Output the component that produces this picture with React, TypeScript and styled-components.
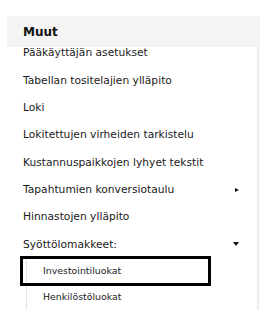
import styled, { createGlobalStyle } from "styled-components";

const GlobalStyle = createGlobalStyle`
  body {
    margin: 0;
    background: #ffffff;
    font-family: "DejaVu Sans", Verdana, sans-serif;
    color: #1a1a1a;
  }
`;

const Panel = styled.nav`
  padding: 16px 0 0 7px;
  height: 299px;
  overflow: hidden;
`;

const Header = styled.div`
  position: relative;
  z-index: 1;
  height: 31px;
  display: flex;
  align-items: center;
  padding-left: 16px;
  background: #f4f4f4;
  font-size: 12px;
  font-weight: bold;
  color: #111;
`;

const MenuList = styled.ul`
  list-style: none;
  margin: -7.7px 1px 0 0;
  padding: 0;
  border-right: 2px solid #ececec;
`;

const MenuItem = styled.li`
  height: 27.33px;
  display: flex;
  align-items: center;
  justify-content: space-between;
  padding: 0 18px 0 16px;
  font-size: 10.7px;
  white-space: nowrap;
`;

// pieni kolmio: oikealle = alivalikko kiinni, alas = auki
const Caret = styled.span<{ $open?: boolean }>`
  width: 0;
  height: 0;
  border-style: solid;
  border-color: transparent;
  ${(p) =>
    p.$open
      ? `border-width: 4px 3px 0 3px; border-top-color: #111;`
      : `border-width: 2.5px 0 2.5px 4px; border-left-color: #111;`}
`;

const SubList = styled.ul`
  list-style: none;
  margin: 0 0 0 19px;
  padding: 0;
  border-left: 1px solid #e2e2e2;
`;

const SubItem = styled.li`
  padding: 1px 0;
`;

const SubLink = styled.a<{ $focused?: boolean }>`
  display: block;
  width: 165px;
  height: 24px;
  line-height: 24px;
  margin-left: -4px;
  padding-left: 20px;
  font-size: 9.4px;
  color: #1a1a1a;
  text-decoration: none;
  outline: ${(p) => (p.$focused ? "3px solid #000" : "none")};
`;

const items: { label: string; caret?: "closed" | "open" }[] = [
  { label: "Pääkäyttäjän asetukset" },
  { label: "Tabellan tositelajien ylläpito" },
  { label: "Loki" },
  { label: "Lokitettujen virheiden tarkistelu" },
  { label: "Kustannuspaikkojen lyhyet tekstit" },
  { label: "Tapahtumien konversiotaulu", caret: "closed" },
  { label: "Hinnastojen ylläpito" },
  { label: "Syöttölomakkeet:", caret: "open" },
];

const subItems = ["Investointiluokat", "Henkilöstöluokat"];

export default function App() {
  return (
    <>
      <GlobalStyle />
      <Panel>
        <Header>Muut</Header>
        <MenuList>
          {items.map((item) => (
            <MenuItem key={item.label}>
              {item.label}
              {item.caret && <Caret $open={item.caret === "open"} />}
            </MenuItem>
          ))}
          <li>
            <SubList>
              {subItems.map((s, i) => (
                <SubItem key={s}>
                  <SubLink href="#" $focused={i === 0}>
                    {s}
                  </SubLink>
                </SubItem>
              ))}
            </SubList>
          </li>
        </MenuList>
      </Panel>
    </>
  );
}
